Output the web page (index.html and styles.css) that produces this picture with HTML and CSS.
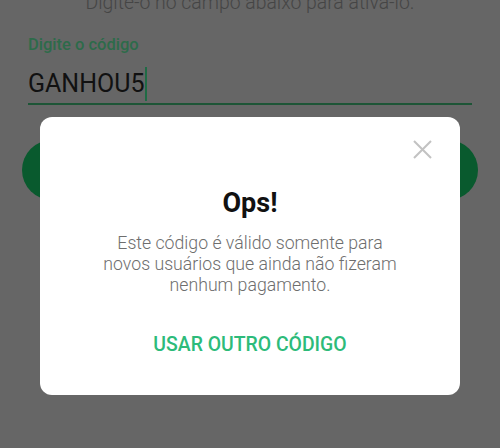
FILE: index.html
```html
<!DOCTYPE html>
<html lang="pt-BR">
<head>
<meta charset="utf-8">
<title>Código promocional</title>
<link rel="stylesheet" href="styles.css">
</head>
<body>
<main class="page">
  <p class="intro">Digite-o no campo abaixo para ativá-lo.</p>
  <div class="field">
    <label class="field-label">Digite o código</label>
    <div class="field-input"><span class="field-value">GANHOU5</span><span class="cursor"></span></div>
  </div>
  <div class="primary-btn"></div>
</main>
<div class="backdrop">
  <div class="modal" role="dialog">
    <button class="close" aria-label="Fechar">
      <svg width="19" height="19" viewBox="0 0 19 19"><path d="M1 1L18 18M18 1L1 18" stroke="#c2c2c2" stroke-width="2" fill="none"/></svg>
    </button>
    <h2 class="modal-title">Ops!</h2>
    <p class="modal-text">Este código é válido somente para<br>novos usuários que ainda não fizeram<br>nenhum pagamento.</p>
    <div class="modal-action">USAR OUTRO CÓDIGO</div>
  </div>
</div>
</body>
</html>
```
FILE: styles.css
```css
html, body {
  margin: 0;
  padding: 0;
}
body {
  width: 500px;
  height: 448px;
  overflow: hidden;
  background: #666666;
  font-family: Roboto, "Noto Sans", sans-serif;
  position: relative;
}
.page {
  padding: 0 28px;
}
.intro {
  margin: -8px 0 0;
  font-size: 19.4px;
  line-height: 22px;
  font-weight: 300;
  color: #454545;
  text-align: center;
}
.field {
  margin-top: 21px;
  display: flex;
  flex-direction: column;
  gap: 12px;
}
.field-label {
  font-size: 16.5px;
  line-height: 20px;
  font-weight: 500;
  color: #2d6b4a;
}
.field-input {
  height: 34px;
  line-height: 34px;
  font-size: 25px;
  color: #111;
  padding-bottom: 2px;
  border-bottom: 2px solid #1d5536;
}
.cursor {
  display: inline-block;
  vertical-align: top;
  width: 2px;
  height: 34px;
  background: #1f6b45;
  margin-left: 1px;
}
.primary-btn {
  margin: 35px -6px 0;
  height: 60px;
  border-radius: 30px;
  background: #095a2e;
}
.backdrop {
  position: absolute;
  inset: 0;
  display: flex;
  justify-content: center;
  align-items: flex-start;
  padding-top: 117px;
}
.modal {
  position: relative;
  width: 420px;
  box-sizing: border-box;
  background: #fff;
  border-radius: 12px;
  padding: 70px 20px 39px;
  text-align: center;
}
.close {
  position: absolute;
  top: 23px;
  right: 28px;
  width: 19px;
  height: 19px;
  padding: 0;
  border: 0;
  background: none;
  display: block;
}
.close svg {
  display: block;
}
.modal-title {
  margin: 0;
  font-size: 27px;
  line-height: 32px;
  font-weight: 700;
  color: #111;
}
.modal-text {
  margin: 14px 0 0;
  font-size: 17.7px;
  line-height: 21px;
  font-weight: 300;
  color: #6e6e6e;
}
.modal-action {
  margin-top: 38px;
  font-size: 19.4px;
  line-height: 22px;
  font-weight: 500;
  color: #2dbb7a;
}
```
